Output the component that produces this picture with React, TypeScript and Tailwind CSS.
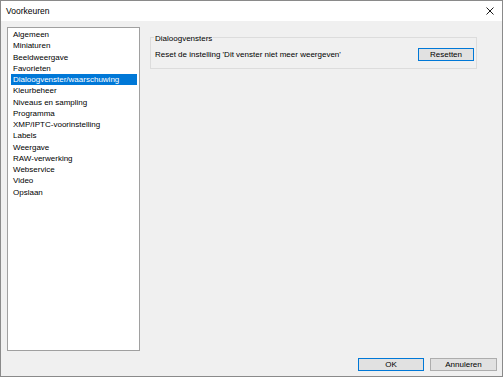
import React from "react";

const items = [
  "Algemeen",
  "Miniaturen",
  "Beeldweergave",
  "Favorieten",
  "Dialoogvenster/waarschuwing",
  "Kleurbeheer",
  "Niveaus en sampling",
  "Programma",
  "XMP/IPTC-voorinstelling",
  "Labels",
  "Weergave",
  "RAW-verwerking",
  "Webservice",
  "Video",
  "Opslaan",
];

function Button({ label, primary }: { label: string; primary?: boolean }) {
  return (
    <button
      className={
        "w-full h-[13px] flex items-center justify-center bg-[#e1e1e1] text-[8px] leading-[9px] text-black border " +
        (primary ? "border-[#0078d7]" : "border-[#adadad]")
      }
    >
      {label}
    </button>
  );
}

export default function App() {
  const selected = 4;

  return (
    <div
      className="w-[504px] h-[378px] bg-white overflow-hidden text-black"
      style={{ fontFamily: '"Liberation Sans", Arial, sans-serif' }}
    >
      <div className="w-[503px] h-[377px] border border-[#8a8a8a] flex flex-col">
        {/* Titelbalk */}
        <div className="h-[20px] bg-white flex items-center justify-between pl-[5px] pr-[8px]">
          <span className="text-[8.5px] leading-[10px]">Voorkeuren</span>
          <svg width="8" height="8" viewBox="0 0 8 8" className="text-[#1a1a1a]">
            <path d="M0.5 0.5 L7.5 7.5 M7.5 0.5 L0.5 7.5" stroke="currentColor" strokeWidth="1" />
          </svg>
        </div>

        {/* Inhoud */}
        <div className="flex-1 bg-[#f0f0f0] flex flex-col pt-[6px] pl-[6px] pr-[5px]">
          <div className="flex">
            {/* Categorielijst */}
            <div className="w-[133px] h-[324px] bg-white border border-[#a0a0a0] pt-[1px] pl-[3px] pr-[2px]">
              {items.map((item, i) => (
                <div
                  key={item}
                  className={
                    "h-[11.25px] flex items-center pl-[2px] text-[8px] leading-[9px] whitespace-nowrap " +
                    (i === selected ? "bg-[#0078d7] text-white" : "")
                  }
                >
                  {item}
                </div>
              ))}
            </div>

            {/* Instellingen */}
            <div className="ml-[10px] mr-[20px] flex-1 pt-[10px]">
              <div className="relative h-[32px] border border-[#dcdcdc] flex items-center justify-between pl-[4px] pr-[2px] pt-[2px]">
                <span className="absolute left-[3px] top-[-4px] bg-[#f0f0f0] px-[1px] text-[8px] leading-[9px]">
                  Dialoogvensters
                </span>
                <span className="text-[8px] leading-[9px] whitespace-nowrap">
                  Reset de instelling 'Dit venster niet meer weergeven'
                </span>
                <div className="w-[56px]">
                  <Button label="Resetten" primary />
                </div>
              </div>
            </div>
          </div>

          {/* Knoppen */}
          <div className="flex justify-end gap-[6px] mt-[7px]">
            <div className="w-[66px]">
              <Button label="OK" primary />
            </div>
            <div className="w-[67px]">
              <Button label="Annuleren" />
            </div>
          </div>
        </div>
      </div>
    </div>
  );
}
